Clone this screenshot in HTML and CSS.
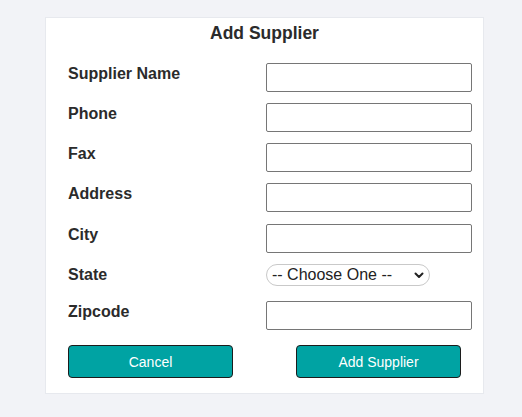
FILE: index.html
```html
<!DOCTYPE html>
<html>
<head>
<meta charset="utf-8">
<link rel="stylesheet" href="styles.css">
</head>
<body>
<div class="card">
  <h2 class="title">Add Supplier</h2>
  <form class="form">
    <div class="row"><label class="label">Supplier Name</label><input class="field" type="text"></div>
    <div class="row"><label class="label">Phone</label><input class="field" type="text"></div>
    <div class="row"><label class="label">Fax</label><input class="field" type="text"></div>
    <div class="row row-wide"><label class="label">Address</label><input class="field" type="text"></div>
    <div class="row"><label class="label">City</label><input class="field" type="text"></div>
    <div class="row row-select"><label class="label">State</label>
      <div class="select-wrap">
        <select class="select"><option>-- Choose One --</option></select>
        <svg class="chevron" width="10" height="7" viewBox="0 0 10 7"><path d="M1.5 1.5 L5 5 L8.5 1.5" fill="none" stroke="#222" stroke-width="2" stroke-linecap="round" stroke-linejoin="round"/></svg>
      </div>
    </div>
    <div class="row"><label class="label">Zipcode</label><input class="field" type="text"></div>
    <div class="buttons">
      <button type="button" class="btn">Cancel</button>
      <button type="button" class="btn">Add Supplier</button>
    </div>
  </form>
</div>
</body>
</html>
```
FILE: styles.css
```css
html, body {
  margin: 0;
  padding: 0;
  background: #f2f3f7;
  font-family: "Liberation Sans", Arial, sans-serif;
}
.card {
  box-sizing: border-box;
  width: 439px;
  margin: 17px 0 0 45px;
  background: #fff;
  border: 1px solid #e7e9ee;
  padding: 4px 10px 15px 22px;
}
.title {
  margin: 0 0 0 -12px;
  font-size: 17.5px;
  line-height: 22px;
  font-weight: bold;
  text-align: center;
  color: #2b2b2b;
}
.form {
  margin-top: 19px;
  display: flex;
  flex-direction: column;
}
.row {
  display: flex;
  height: 29px;
  margin-bottom: 11px;
}
.row-wide {
  margin-bottom: 12px;
}
.row-select {
  height: 26px;
}
.label {
  width: 198px;
  font-size: 16px;
  font-weight: bold;
  color: #2b2b2b;
  padding-top: 2px;
  line-height: 18px;
}
.field {
  box-sizing: border-box;
  width: 206px;
  height: 29px;
  margin: 0;
  border: 1px solid #767676;
  border-radius: 2px;
  background: #fff;
}
.select-wrap {
  position: relative;
  width: 164px;
  height: 22px;
}
.select {
  appearance: none;
  -webkit-appearance: none;
  box-sizing: border-box;
  width: 164px;
  height: 22px;
  margin: 0;
  padding: 0 0 0 5px;
  border: 1px solid #c9c9c9;
  border-radius: 11px;
  background: #fff;
  font-family: "Liberation Sans", Arial, sans-serif;
  font-size: 16px;
  color: #222;
  line-height: 20px;
}
.chevron {
  position: absolute;
  right: 6px;
  top: 8px;
  pointer-events: none;
}
.buttons {
  display: flex;
  justify-content: space-between;
  width: 393px;
  margin-top: 4px;
}
.btn {
  box-sizing: border-box;
  width: 165px;
  height: 33px;
  background: #00a3a3;
  border: 1px solid #1c1c1c;
  border-radius: 4px;
  color: #fff;
  font-family: "Liberation Sans", Arial, sans-serif;
  font-size: 14px;
  padding: 0;
}
```
